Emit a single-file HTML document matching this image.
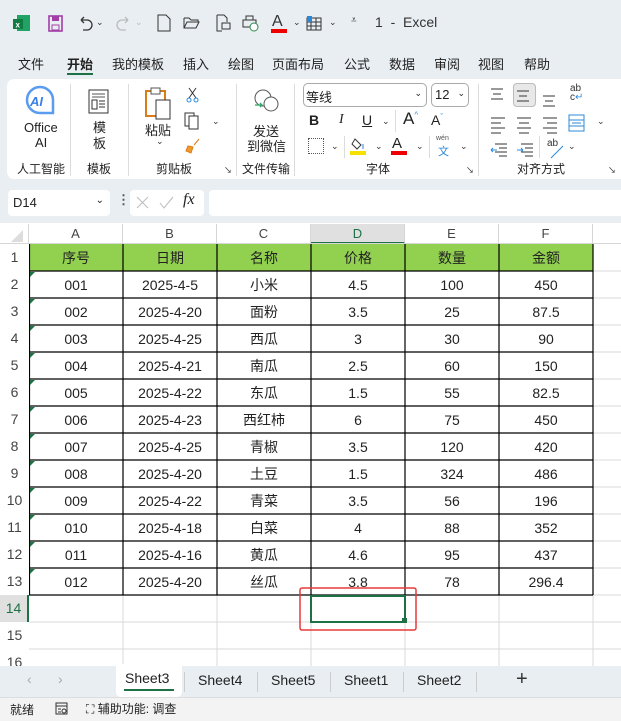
<!DOCTYPE html>
<html><head><meta charset="utf-8"><style>
*{box-sizing:border-box;margin:0;padding:0}
body{width:621px;height:721px;overflow:hidden;background:#e9eef2;font-family:"Liberation Sans","Noto Sans CJK SC",sans-serif;color:#222;position:relative;font-size:13px}
.a{position:absolute;white-space:nowrap}
.tab{position:absolute;top:54px;font-size:13px}
.sep{position:absolute;width:1px;background:#dcdcdc}
.gl{position:absolute;top:160px;font-size:12px}
.ch{position:absolute;top:224px;height:20px;text-align:center;font-size:13px;color:#444;line-height:20px;border-right:1px solid #d6d6d6;background:#fff}
.rh{position:absolute;left:0;width:29px;text-align:center;font-size:14px;color:#444;border-bottom:1px solid #d6d6d6;background:#fff;line-height:27px}
.st{position:absolute;top:672px;font-size:14px;color:#222}
.dd{position:absolute;font-size:9px;color:#333}
</style></head><body>
<!-- title bar -->
<svg class="a" style="left:13px;top:15px" width="17" height="17"><rect x="4" y="0" width="13" height="16" fill="#21a366"/><rect x="0" y="4" width="10" height="10" fill="#107c41"/><text x="2.5" y="12.5" font-size="8" fill="#fff" font-family="Liberation Sans" font-weight="bold">x</text></svg>
<svg class="a" style="left:48px;top:15px" width="16" height="17"><rect x="1" y="1" width="13" height="15" fill="none" stroke="#a23ea6" stroke-width="1.6"/><rect x="4" y="1" width="7" height="5" fill="#a23ea6"/><rect x="4" y="10" width="7" height="5" fill="none" stroke="#a23ea6"/></svg>
<svg class="a" style="left:77px;top:15px" width="16" height="17"><path d="M4 5h6a5 5 0 0 1 0 10H6M4 5l3-3M4 5l3 3" fill="none" stroke="#333" stroke-width="1.3"/></svg><div class="dd" style="left:96px;top:17px">⌄</div>
<svg class="a" style="left:116px;top:15px" width="16" height="17"><path d="M12 5H6a5 5 0 0 0 0 10h4M12 5L9 2M12 5L9 8" fill="none" stroke="#bbb" stroke-width="1.3"/></svg><div class="dd" style="left:135px;top:17px;color:#bbb">⌄</div>
<svg class="a" style="left:157px;top:14px" width="14" height="18"><path d="M1 1h8l4 4v12H1z" fill="none" stroke="#333"/></svg>
<svg class="a" style="left:183px;top:16px" width="18" height="14"><path d="M1 2h5l2 2h7v2M1 2v10h12l3-6H4L1 12" fill="none" stroke="#333"/></svg>
<svg class="a" style="left:216px;top:14px" width="16" height="18"><path d="M1 1h7l3 3v4M1 1v16h5" fill="none" stroke="#333"/><rect x="6" y="9" width="8" height="6" fill="none" stroke="#333"/></svg>
<svg class="a" style="left:241px;top:15px" width="18" height="17"><rect x="2" y="5" width="13" height="7" fill="none" stroke="#333"/><rect x="5" y="1" width="7" height="4" fill="none" stroke="#333"/><circle cx="13" cy="12" r="4" fill="#fff" stroke="#2a8a4a"/></svg>
<div class="a" style="left:272px;top:13px;font-size:16px;color:#333">A</div><div class="a" style="left:271px;top:29px;width:16px;height:4px;background:#e00"></div><div class="dd" style="left:293px;top:17px">⌄</div>
<svg class="a" style="left:306px;top:15px" width="16" height="16"><rect x="1" y="3" width="14" height="12" fill="none" stroke="#333"/><path d="M1 7h14M1 11h14M5 3v12M10 3v12" stroke="#333"/><rect x="1" y="1" width="5" height="6" fill="#2b88d8"/></svg>
<div class="dd" style="left:329px;top:17px">⌄</div>
<div class="a" style="left:351px;top:15px;font-size:10px">⩡</div>
<div class="a" style="left:375px;top:14px;font-size:14px;color:#333">1&nbsp; - &nbsp;Excel</div>
<!-- tabs -->
<div class="tab" style="left:18px">文件</div>
<div class="tab" style="left:67px;font-weight:bold">开始</div>
<div class="a" style="left:67px;top:73px;width:26px;height:2px;background:#1e7145"></div>
<div class="tab" style="left:112px">我的模板</div>
<div class="tab" style="left:183px">插入</div>
<div class="tab" style="left:228px">绘图</div>
<div class="tab" style="left:272px">页面布局</div>
<div class="tab" style="left:344px">公式</div>
<div class="tab" style="left:389px">数据</div>
<div class="tab" style="left:434px">审阅</div>
<div class="tab" style="left:478px">视图</div>
<div class="tab" style="left:524px">帮助</div>
<!-- ribbon -->
<div class="a" style="left:7px;top:79px;width:620px;height:100px;background:#fff;border-radius:7px"></div>
<div class="sep" style="left:70px;top:84px;height:92px"></div>
<div class="sep" style="left:128px;top:84px;height:92px"></div>
<div class="sep" style="left:236px;top:84px;height:92px"></div>
<div class="sep" style="left:294px;top:84px;height:92px"></div>
<div class="sep" style="left:478px;top:84px;height:92px"></div>
<svg class="a" style="left:25px;top:85px" width="32" height="32"><path d="M15 2a13 13 0 1 0 0 26h13V15A13 13 0 0 0 15 2z" fill="#fff" stroke="#5a9cf0" stroke-width="2.5"/><text x="5" y="21" font-size="13" font-weight="bold" font-style="italic" fill="#3a7fe6" font-family="Liberation Sans">AI</text></svg>
<div class="a" style="left:24px;top:120px;font-size:13px">Office</div>
<div class="a" style="left:35px;top:135px;font-size:13px">AI</div>
<div class="gl" style="left:17px">人工智能</div>
<svg class="a" style="left:88px;top:89px" width="22" height="26"><rect x="1" y="1" width="19" height="23" fill="none" stroke="#333"/><path d="M4 5h13M4 8h13" stroke="#555"/><rect x="4" y="11" width="5" height="9" fill="none" stroke="#333"/><path d="M11 12h6M11 15h6M11 18h6" stroke="#333"/></svg>
<div class="a" style="left:93px;top:120px;font-size:13px;line-height:16px">模<br>板</div>
<div class="gl" style="left:87px">模板</div>
<svg class="a" style="left:145px;top:87px" width="30" height="34"><rect x="1" y="4" width="19" height="25" fill="#fff" stroke="#d97d18" stroke-width="2"/><rect x="6" y="1" width="9" height="6" fill="#fff" stroke="#555"/><rect x="11" y="13" width="14" height="19" fill="#fff" stroke="#333"/></svg>
<div class="a" style="left:145px;top:120px">粘贴</div>
<div class="dd" style="left:156px;top:136px">⌄</div>
<svg class="a" style="left:186px;top:87px" width="13" height="16"><path d="M3 1l7 10M10 1L3 11" stroke="#333"/><circle cx="3" cy="13" r="2" fill="none" stroke="#2b88d8"/><circle cx="10" cy="13" r="2" fill="none" stroke="#2b88d8"/></svg>
<svg class="a" style="left:184px;top:112px" width="16" height="18"><rect x="1" y="1" width="9" height="13" fill="none" stroke="#333"/><rect x="5" y="4" width="9" height="13" fill="#fff" stroke="#333"/></svg>
<div class="dd" style="left:212px;top:116px">⌄</div>
<svg class="a" style="left:185px;top:138px" width="16" height="16"><path d="M9 7l5-6M3 8l5 1-2 6-5-2z" fill="#f39a2b" stroke="#d97d18"/></svg>
<div class="gl" style="left:156px">剪贴板</div>
<div class="a" style="left:224px;top:165px;font-size:8px">↘</div>
<svg class="a" style="left:252px;top:88px" width="28" height="26"><circle cx="11" cy="10" r="8" fill="none" stroke="#555"/><circle cx="19" cy="16" r="7" fill="#fff" stroke="#555"/><path d="M3 17h7M8 15l2 2-2 2" fill="none" stroke="#2aa868" stroke-width="1.3"/></svg>
<div class="a" style="left:253px;top:121px;font-size:13px">发送</div>
<div class="a" style="left:247px;top:136px;font-size:13px">到微信</div>
<div class="gl" style="left:242px">文件传输</div>
<div class="a" style="left:303px;top:83px;width:124px;height:24px;border:1px solid #aaa;border-radius:5px;font-size:13px;padding:3px 2px">等线<span style="position:absolute;right:4px;top:4px;font-size:9px">⌄</span></div>
<div class="a" style="left:431px;top:83px;width:38px;height:24px;border:1px solid #aaa;border-radius:5px;font-size:13px;padding:3px 3px">12<span style="position:absolute;right:3px;top:4px;font-size:9px">⌄</span></div>
<div class="a" style="left:309px;top:112px;font-weight:bold;font-size:14px">B</div>
<div class="a" style="left:339px;top:112px;font-style:italic;font-size:14px;font-family:'Liberation Serif'">I</div>
<div class="a" style="left:362px;top:112px;text-decoration:underline;font-size:14px">U</div>
<div class="dd" style="left:382px;top:116px">⌄</div>
<div class="sep" style="left:395px;top:110px;height:22px"></div>
<div class="a" style="left:403px;top:109px;font-size:17px">A<sup style="font-size:8px;color:#2b88d8">^</sup></div>
<div class="a" style="left:431px;top:112px;font-size:14px">A<sup style="font-size:8px;color:#2b88d8">ˇ</sup></div>
<div class="a" style="left:308px;top:138px;width:16px;height:16px;border:1px dotted #555"></div>
<div class="dd" style="left:331px;top:141px">⌄</div>
<div class="sep" style="left:344px;top:136px;height:22px"></div>
<svg class="a" style="left:351px;top:137px" width="16" height="14"><path d="M4 2l6 6-4 4-5-5z" fill="none" stroke="#333"/><path d="M12 7v5" stroke="#2b88d8"/></svg><div class="a" style="left:350px;top:151px;width:16px;height:4px;background:#f5e000"></div><div class="dd" style="left:375px;top:141px">⌄</div>
<div class="a" style="left:392px;top:135px;font-size:15px">A</div><div class="a" style="left:391px;top:151px;width:16px;height:4px;background:#e00"></div><div class="dd" style="left:416px;top:141px">⌄</div>
<div class="sep" style="left:429px;top:136px;height:22px"></div>
<div class="a" style="left:436px;top:135px;font-size:7px;color:#555">wén</div><div class="a" style="left:438px;top:143px;font-size:11px;color:#2b88d8">文</div><div class="dd" style="left:460px;top:141px">⌄</div>
<div class="gl" style="left:366px">字体</div>
<div class="a" style="left:466px;top:165px;font-size:8px">↘</div>
<div class="a" style="left:513px;top:83px;width:23px;height:24px;background:#e8e8e8;border:1px solid #bbb;border-radius:4px"></div>
<svg class="a" style="left:489px;top:86px" width="110" height="80" stroke="#333" fill="none">
<path d="M2 3h12M4 8h8M2 13h12"/><path d="M28 5h12M30 10h8M28 15h12"/><path d="M54 10h12M56 15h8M54 20h12"/>
<path d="M2 32h14M2 37h10M2 42h14M2 47h10"/><path d="M28 32h14M30 37h10M28 42h14M30 47h10"/><path d="M54 32h14M58 37h10M54 42h14M58 47h10"/>
<rect x="80" y="29" width="15" height="16" stroke="#2b88d8"/><path d="M80 34h15M80 40h15M83 37h9" stroke="#2b88d8"/>
<path d="M6 58h12M10 62h8M6 66h12M10 70h8"/><path d="M2 64h6M2 64l2-2M2 64l2 2" stroke="#2b88d8"/>
<path d="M32 58h12M36 62h8M32 66h12M36 70h8"/><path d="M28 64h6M34 64l-2-2M34 64l-2 2" stroke="#2b88d8"/>
<path d="M62 72l12-12" stroke="#2b88d8"/>
</svg>
<div class="a" style="left:570px;top:84px;font-size:10px;line-height:9px;color:#333">ab<br>c<span style="color:#2b88d8">↵</span></div>
<div class="dd" style="left:597px;top:116px">⌄</div>
<div class="sep" style="left:539px;top:136px;height:22px"></div>
<div class="a" style="left:547px;top:138px;font-size:10px;color:#333">ab</div>
<div class="dd" style="left:568px;top:141px">⌄</div>
<div class="gl" style="left:517px">对齐方式</div>
<div class="a" style="left:608px;top:165px;font-size:8px">↘</div>
<!-- formula bar -->
<div class="a" style="left:8px;top:190px;width:102px;height:26px;background:#fff;border-radius:4px;font-size:13px;padding:5px 5px">D14<span style="position:absolute;right:6px;top:5px;font-size:10px">⌄</span></div>
<div class="a" style="left:117px;top:192px;font-size:13px;font-weight:bold;color:#555">⋮</div>
<div class="a" style="left:130px;top:190px;width:74px;height:26px;background:#fff;border-radius:4px"></div>
<svg class="a" style="left:136px;top:196px" width="40" height="14"><path d="M1 1l11 11M12 1L1 12" stroke="#bbb"/><path d="M24 7l4 5 9-11" fill="none" stroke="#bbb"/></svg>
<div class="a" style="left:183px;top:191px;font-size:16px;font-style:italic;font-family:'Liberation Serif'">fx</div>
<div class="a" style="left:209px;top:190px;width:420px;height:26px;background:#fff;border-radius:4px"></div>
<!-- grid -->
<div class="a" style="left:0;top:223px;width:621px;height:443px;background:#fff"></div>
<div class="a" style="left:0;top:224px;width:29px;height:20px;background:#fff;border-right:1px solid #d6d6d6;border-bottom:1px solid #d6d6d6"></div>
<svg class="a" style="left:10px;top:229px" width="14" height="14"><path d="M13 1v12H1z" fill="#ddd"/></svg>
<svg class="a" style="left:29px;top:244px" width="592" height="422">
<g stroke="#dadada">
<path d="M94 0v422M188 0v422M282 0v422M376 0v422M470 0v422M564 0v422"/>
<path d="M0 27h592M0 54h592M0 81h592M0 108h592M0 135h592M0 162h592M0 189h592M0 216h592M0 243h592M0 270h592M0 297h592M0 324h592M0 351h592M0 378h592M0 405h592"/>
</g>
<rect x="0" y="0" width="564" height="27" fill="#92d050"/>
<g stroke="#000" stroke-width="1.2">
<path d="M0 27h564M0 54h564M0 81h564M0 108h564M0 135h564M0 162h564M0 189h564M0 216h564M0 243h564M0 270h564M0 297h564M0 324h564M0 351h564"/>
<path d="M0.5 0v351M94 0v351M188 0v351M282 0v351M376 0v351M470 0v351M564 0v351"/>
</g>
<g fill="#1e7145"><path d="M1 28h5l-5 5z"/><path d="M1 55h5l-5 5z"/><path d="M1 82h5l-5 5z"/><path d="M1 109h5l-5 5z"/><path d="M1 136h5l-5 5z"/><path d="M1 163h5l-5 5z"/><path d="M1 190h5l-5 5z"/><path d="M1 217h5l-5 5z"/><path d="M1 244h5l-5 5z"/><path d="M1 271h5l-5 5z"/><path d="M1 298h5l-5 5z"/><path d="M1 325h5l-5 5z"/></g>
<rect x="282" y="352" width="94" height="26" fill="none" stroke="#1e7145" stroke-width="2"/>
<rect x="373" y="374" width="5" height="5" fill="#1e7145"/>
<rect x="271" y="344" width="116" height="42" rx="2" fill="none" stroke="#e8393a" stroke-width="1.5"/>
</svg>
<div class="ch" style="left:29px;width:94px">A</div>
<div class="ch" style="left:123px;width:94px">B</div>
<div class="ch" style="left:217px;width:94px">C</div>
<div class="ch" style="left:311px;width:94px;background:#e0e0e0;color:#1e7145;border-bottom:2px solid #1e7145">D</div>
<div class="ch" style="left:405px;width:94px">E</div>
<div class="ch" style="left:499px;width:94px">F</div>
<div class="a" style="left:593px;top:224px;width:28px;height:20px;background:#fff;border-bottom:1px solid #d6d6d6"></div>
<div class="a" style="left:29px;top:243px;width:592px;height:1px;background:#d6d6d6"></div>
<div class="a" style="left:28px;top:244px;width:1px;height:422px;background:#d6d6d6"></div>
<div class="rh" style="top:244px">1</div><div class="rh" style="top:271px">2</div><div class="rh" style="top:298px">3</div><div class="rh" style="top:325px">4</div><div class="rh" style="top:352px">5</div><div class="rh" style="top:379px">6</div><div class="rh" style="top:406px">7</div><div class="rh" style="top:433px">8</div><div class="rh" style="top:460px">9</div><div class="rh" style="top:487px">10</div><div class="rh" style="top:514px">11</div><div class="rh" style="top:541px">12</div><div class="rh" style="top:568px">13</div><div class="rh" style="top:595px;background:#e0e0e0;color:#1e7145;border-right:2px solid #1e7145">14</div><div class="rh" style="top:622px">15</div><div class="rh" style="top:649px">16</div>
<div style="position:absolute;left:29px;top:245px;width:564px;font-size:14px;line-height:27px">
<div style="display:flex"><span style="width:94px;text-align:center">序号</span><span style="width:94px;text-align:center">日期</span><span style="width:94px;text-align:center">名称</span><span style="width:94px;text-align:center">价格</span><span style="width:94px;text-align:center">数量</span><span style="width:94px;text-align:center">金额</span></div>
</div>
<div id="data" style="position:absolute;left:29px;top:272px;width:564px;font-size:14px;line-height:27px">
<style>#data div{display:flex;height:27px}#data span{width:94px;text-align:center}</style>
<div><span>001</span><span>2025-4-5</span><span>小米</span><span>4.5</span><span>100</span><span>450</span></div>
<div><span>002</span><span>2025-4-20</span><span>面粉</span><span>3.5</span><span>25</span><span>87.5</span></div>
<div><span>003</span><span>2025-4-25</span><span>西瓜</span><span>3</span><span>30</span><span>90</span></div>
<div><span>004</span><span>2025-4-21</span><span>南瓜</span><span>2.5</span><span>60</span><span>150</span></div>
<div><span>005</span><span>2025-4-22</span><span>东瓜</span><span>1.5</span><span>55</span><span>82.5</span></div>
<div><span>006</span><span>2025-4-23</span><span>西红柿</span><span>6</span><span>75</span><span>450</span></div>
<div><span>007</span><span>2025-4-25</span><span>青椒</span><span>3.5</span><span>120</span><span>420</span></div>
<div><span>008</span><span>2025-4-20</span><span>土豆</span><span>1.5</span><span>324</span><span>486</span></div>
<div><span>009</span><span>2025-4-22</span><span>青菜</span><span>3.5</span><span>56</span><span>196</span></div>
<div><span>010</span><span>2025-4-18</span><span>白菜</span><span>4</span><span>88</span><span>352</span></div>
<div><span>011</span><span>2025-4-16</span><span>黄瓜</span><span>4.6</span><span>95</span><span>437</span></div>
<div><span>012</span><span>2025-4-20</span><span>丝瓜</span><span>3.8</span><span>78</span><span>296.4</span></div>
</div>
<!-- sheet tabs -->
<div class="a" style="left:0;top:666px;width:621px;height:31px;background:#e9eef2"></div>
<div class="a" style="left:27px;top:671px;font-size:14px;color:#aaa">‹</div>
<div class="a" style="left:58px;top:671px;font-size:14px;color:#aaa">›</div>
<div class="a" style="left:116px;top:664px;width:36px;height:33px;background:#fff;border-radius:0 0 5px 5px;left:116px;width:36px"></div>
<div class="a" style="left:116px;top:664px;width:66px;height:33px;background:#fff;border-radius:0 0 5px 5px"></div>
<div class="st" style="left:125px;top:670px">Sheet3</div>
<div class="a" style="left:124px;top:689px;width:50px;height:2px;background:#1e7145"></div>
<div class="st" style="left:198px">Sheet4</div>
<div class="st" style="left:271px">Sheet5</div>
<div class="st" style="left:344px">Sheet1</div>
<div class="st" style="left:417px">Sheet2</div>
<div class="sep" style="left:184px;top:672px;height:20px;background:#ccc"></div>
<div class="sep" style="left:257px;top:672px;height:20px;background:#ccc"></div>
<div class="sep" style="left:330px;top:672px;height:20px;background:#ccc"></div>
<div class="sep" style="left:403px;top:672px;height:20px;background:#ccc"></div>
<div class="sep" style="left:476px;top:672px;height:20px;background:#ccc"></div>
<div class="a" style="left:516px;top:668px;font-size:20px;color:#333">+</div>
<!-- status -->
<div class="a" style="left:0;top:697px;width:621px;height:24px;background:#f3f3f3;border-top:1px solid #ddd"></div>
<div class="a" style="left:10px;top:701px;font-size:12px">就绪</div>
<svg class="a" style="left:55px;top:702px" width="14" height="14"><rect x="1" y="1" width="11" height="11" fill="none" stroke="#333"/><path d="M1 4h11M3 7h3M3 10h3" stroke="#333"/><circle cx="9" cy="9" r="2" fill="none" stroke="#333"/></svg>
<div class="a" style="left:86px;top:700px;font-size:12px">⛶ 辅助功能: 调查</div>
</body></html>
